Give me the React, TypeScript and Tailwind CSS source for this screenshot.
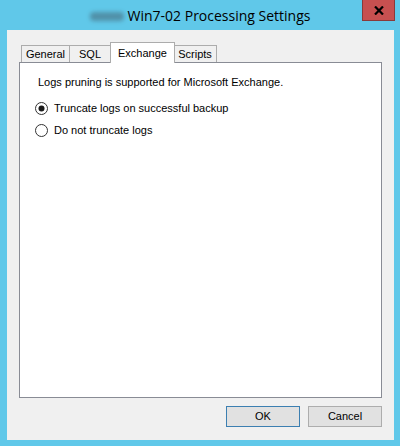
import React from "react";

function Radio({ checked, label }: { checked: boolean; label: string }) {
  return (
    <div className="flex items-center h-[13px]">
      <svg width="13" height="13" viewBox="0 0 13 13" className="shrink-0">
        <circle cx="6.5" cy="6.5" r="6" fill="#ffffff" stroke="#333333" strokeWidth="1" />
        {checked && <circle cx="6.5" cy="6.5" r="3" fill="#1a1a1a" />}
      </svg>
      <span className="ml-[6px] text-[11px] text-black leading-none">{label}</span>
    </div>
  );
}

function Tab({ label, selected, w }: { label: string; selected?: boolean; w: string }) {
  if (selected) {
    return (
      <div
        className={`${w} h-[21px] -mx-[1px] relative z-10 bg-white border border-b-0 border-[#acacac] flex items-start justify-center pt-[2px] text-[11px] text-black`}
      >
        {label}
      </div>
    );
  }
  return (
    <div
      className={`${w} h-[18px] mt-[3px] bg-[#f0f0f0] border border-b-0 border-[#acacac] -ml-[1px] first:ml-0 flex items-center justify-center text-[11px] text-black`}
    >
      {label}
    </div>
  );
}

export default function App() {
  return (
    <div
      className="w-[400px] h-[446px] bg-[#60c8e9] flex flex-col overflow-hidden"
      style={{ fontFamily: '"Liberation Sans", Arial, sans-serif' }}
    >
      <div className="h-[30px] flex items-start relative">
        <div className="flex-1 h-[30px] flex items-center justify-center">
          <div className="w-[34px] h-[9px] mr-[4px] mt-[2px] bg-[#4a7a8e] opacity-70 blur-[2px] rounded-sm" />
          <span className="text-[14px] text-black" style={{ fontFamily: '"Open Sans", sans-serif' }}>
            Win7-02 Processing Settings
          </span>
        </div>
        <div className="absolute right-[5px] top-0 w-[33px] h-[21px] bg-[#c75050] border border-[#8a3a3a] border-t-0 flex items-center justify-center">
          <svg width="10" height="9" viewBox="0 0 10 9">
            <path d="M1 0.5 L9 8.5 M9 0.5 L1 8.5" stroke="#000" strokeWidth="2.2" />
          </svg>
        </div>
      </div>
      <div className="ml-[7px] mr-[6px] h-[410px] bg-[#f0f0f0] flex flex-col px-[12px] pt-[12px]">
        <div className="flex pl-[2px] h-[21px] items-start">
          <Tab label="General" w="w-[49px]" />
          <Tab label="SQL" w="w-[42px]" />
          <Tab label="Exchange" selected w="w-[65px]" />
          <Tab label="Scripts" w="w-[44px]" />
        </div>
        <div className="-mt-[1px] h-[336px] bg-white border border-[#898c95] flex flex-col pl-[18px] pt-[14px]">
          <div className="text-[11px] text-black leading-none h-[13px]">
            Logs pruning is supported for Microsoft Exchange.
          </div>
          <div className="mt-[12px] -ml-[3px] flex flex-col gap-[9px]">
            <Radio checked label="Truncate logs on successful backup" />
            <Radio checked={false} label="Do not truncate logs" />
          </div>
        </div>
        <div className="flex justify-end gap-[8px] mt-[8px]">
          <div className="w-[74px] h-[21px] bg-[#e1e1e1] border border-[#3c7fb1] flex items-center justify-center text-[11px] text-black">
            OK
          </div>
          <div className="w-[74px] h-[21px] bg-[#e1e1e1] border border-[#adadad] flex items-center justify-center text-[11px] text-black">
            Cancel
          </div>
        </div>
      </div>
    </div>
  );
}
